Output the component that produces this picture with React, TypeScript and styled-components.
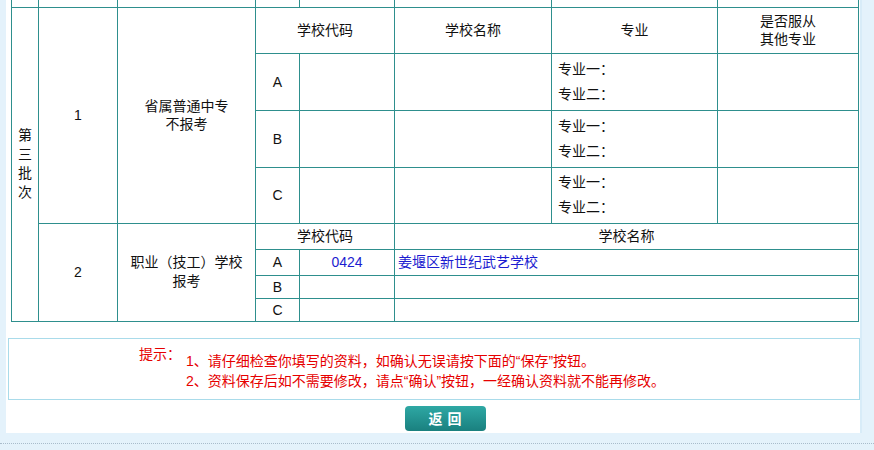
import React from 'react';
import styled, { createGlobalStyle } from 'styled-components';

const GlobalStyle = createGlobalStyle`
    html, body {
        margin: 0;
        padding: 0;
        background: #e4f2fb;
        font-family: 'Liberation Sans', 'Noto Sans CJK SC', sans-serif;
        font-size: 14px;
        color: #111;
    }
`;

const Page = styled.div`
    width: 874px;
    height: 450px;
    overflow: hidden;
    background: #e4f2fb;
`;

const Panel = styled.div`
    margin-left: 6px;
    width: 854px;
    background: #fff;
    border-right: 2px solid #d8ecf8;
    padding-bottom: 2px;
`;

const Table = styled.table`
    margin-left: 5px;
    width: 847px;
    border-collapse: collapse;
    table-layout: fixed;
    font-size: 14px;
`;

const Row = styled.tr<{ $h: number }>`
    height: ${({ $h }) => $h}px;

    &.cut td {
        border-top: none;
    }
`;

const Cell = styled.td<{ $align?: 'left' | 'center'; $blue?: boolean; $lh?: number }>`
    border: 1px solid #2e8f8d;
    padding: ${({ $align }) => ($align === 'left' ? '0 6px' : '0')};
    text-align: ${({ $align }) => $align || 'center'};
    vertical-align: middle;
    line-height: ${({ $lh }) => $lh || 18}px;
    color: ${({ $blue }) => ($blue ? '#1c1cd0' : '#111')};
`;

const BatchCell = styled(Cell)`
    padding: 0 6px;
    line-height: 19px;
    word-break: break-all;
`;

const HintBox = styled.div`
    margin: 16px 0 0 2px;
    border: 1px solid #a9dbea;
    padding: 6px 0 8px;
    display: flex;
    gap: 5px;
    color: #e60000;
    font-size: 14px;
`;

const HintLabel = styled.div`
    width: 172px;
    text-align: right;
    line-height: 18px;
`;

const HintList = styled.div`
    margin-top: 6px;
    line-height: 20px;
`;

const ButtonRow = styled.div`
    display: flex;
    justify-content: center;
    padding: 6px 0 0 24px;
`;

const BackButton = styled.button`
    width: 81px;
    height: 25px;
    border: none;
    border-radius: 4px;
    background: linear-gradient(#2ea8a4, #1a807f);
    color: #fff;
    font-family: 'Noto Sans CJK SC', sans-serif;
    font-weight: bold;
    font-size: 14px;
    letter-spacing: 5px;
    padding: 0 0 0 5px;
    cursor: pointer;
`;

const Footer = styled.div`
    height: 17px;
    padding-top: 10px;
    box-sizing: border-box;
`;

const Dots = styled.div`
    border-top: 1px dotted #a9bccb;
`;

const widths = [27, 79, 138, 44, 95, 157, 166, 141];
const letters = ['A', 'B', 'C'];
const secondRows = [
    { h: 26, code: '0424', name: '姜堰区新世纪武艺学校' },
    { h: 23, code: '', name: '' },
    { h: 23, code: '', name: '' },
];
const firstHeights = [57, 57, 56];

export default function App() {
    return (
        <Page>
            <GlobalStyle />
            <Panel>
                <Table>
                    <colgroup>
                        {widths.map((w, i) => (
                            <col key={i} style={{ width: w }} />
                        ))}
                    </colgroup>
                    <tbody>
                        <Row $h={7} className="cut">
                            {widths.map((_, i) => (
                                <Cell key={i} />
                            ))}
                        </Row>
                        <Row $h={46}>
                            <BatchCell rowSpan={9}>第三批次</BatchCell>
                            <Cell rowSpan={4}>1</Cell>
                            <Cell rowSpan={4}>
                                省属普通中专
                                <br />
                                不报考
                            </Cell>
                            <Cell colSpan={2}>学校代码</Cell>
                            <Cell>学校名称</Cell>
                            <Cell>专业</Cell>
                            <Cell>
                                是否服从
                                <br />
                                其他专业
                            </Cell>
                        </Row>
                        {letters.map((l, i) => (
                            <Row $h={firstHeights[i]} key={l}>
                                <Cell>{l}</Cell>
                                <Cell />
                                <Cell />
                                <Cell $align="left" $lh={25}>
                                    专业一：
                                    <br />
                                    专业二：
                                </Cell>
                                <Cell />
                            </Row>
                        ))}
                        <Row $h={26}>
                            <Cell rowSpan={4}>2</Cell>
                            <Cell rowSpan={4} $lh={19}>
                                职业（技工）学校
                                <br />
                                报考
                            </Cell>
                            <Cell colSpan={2}>学校代码</Cell>
                            <Cell colSpan={3}>学校名称</Cell>
                        </Row>
                        {secondRows.map((r, i) => (
                            <Row $h={r.h} key={i}>
                                <Cell>{letters[i]}</Cell>
                                <Cell $blue>{r.code}</Cell>
                                <Cell colSpan={3} $align="left" $blue style={{ paddingLeft: 3 }}>
                                    {r.name}
                                </Cell>
                            </Row>
                        ))}
                    </tbody>
                </Table>

                <HintBox>
                    <HintLabel>提示：</HintLabel>
                    <HintList>
                        <div>1、请仔细检查你填写的资料，如确认无误请按下面的“保存”按钮。</div>
                        <div>2、资料保存后如不需要修改，请点“确认”按钮，一经确认资料就不能再修改。</div>
                    </HintList>
                </HintBox>

                <ButtonRow>
                    <BackButton>返回</BackButton>
                </ButtonRow>
            </Panel>
            <Footer>
                <Dots />
            </Footer>
        </Page>
    );
}
